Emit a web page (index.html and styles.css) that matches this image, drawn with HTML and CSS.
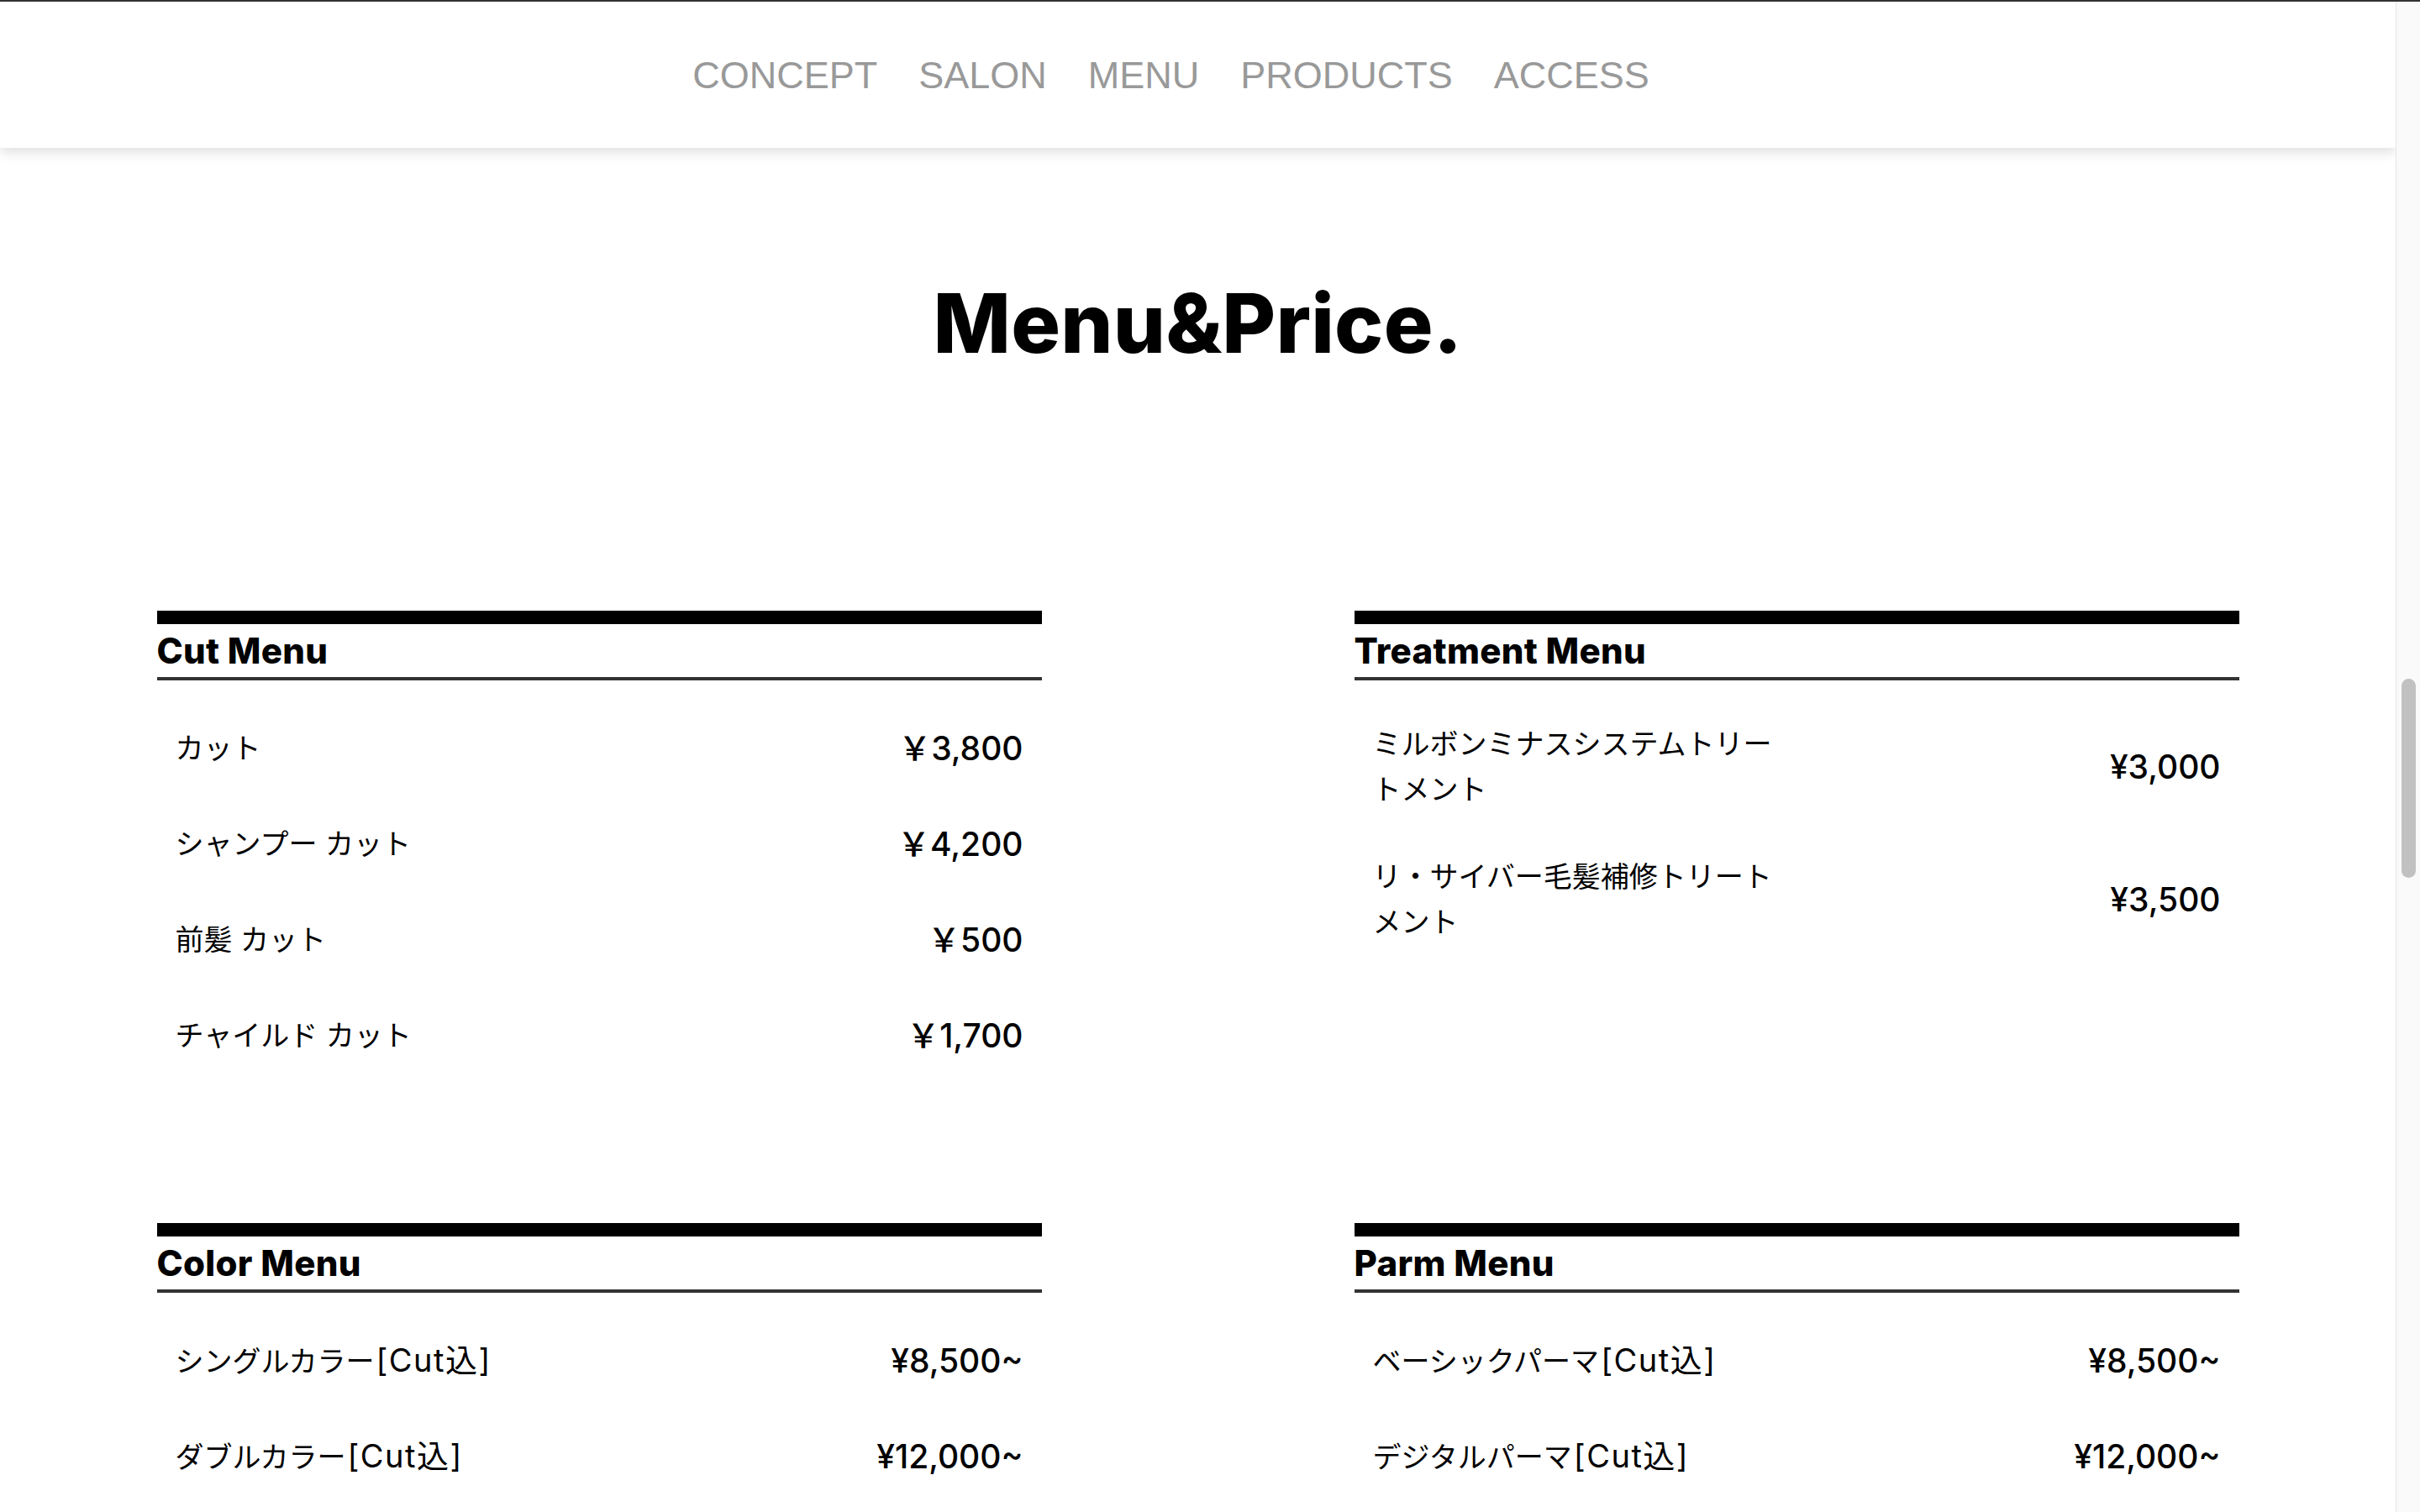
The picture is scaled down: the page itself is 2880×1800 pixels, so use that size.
FILE: index.html
```html
<!DOCTYPE html>
<html lang="ja">
<head>
<meta charset="utf-8">
<title>Menu&amp;Price.</title>
<link rel="stylesheet" href="styles.css">
</head>
<body>
<div class="page">
  <header class="site-header">
    <nav>
      <ul class="nav-list">
        <li>CONCEPT</li>
        <li>SALON</li>
        <li>MENU</li>
        <li>PRODUCTS</li>
        <li>ACCESS</li>
      </ul>
    </nav>
  </header>
  <main class="main">
    <h1 class="title">Menu&amp;Price.</h1>
    <div class="menu-grid">
      <section class="menu-block">
        <h2 class="menu-head">Cut Menu</h2>
        <ul class="menu-list">
          <li class="menu-row"><span class="name">カット</span><span class="price">￥3,800</span></li>
          <li class="menu-row"><span class="name">シャンプー カット</span><span class="price">￥4,200</span></li>
          <li class="menu-row"><span class="name">前髪 カット</span><span class="price">￥500</span></li>
          <li class="menu-row"><span class="name">チャイルド カット</span><span class="price">￥1,700</span></li>
        </ul>
      </section>
      <section class="menu-block">
        <h2 class="menu-head">Treatment Menu</h2>
        <ul class="menu-list">
          <li class="menu-row"><span class="name">ミルボンミナスシステムトリートメント</span><span class="price">¥3,000</span></li>
          <li class="menu-row"><span class="name">リ・サイバー毛髪補修トリートメント</span><span class="price">¥3,500</span></li>
        </ul>
      </section>
      <section class="menu-block">
        <h2 class="menu-head">Color Menu</h2>
        <ul class="menu-list">
          <li class="menu-row"><span class="name">シングルカラー<span class="incl">[Cut込]</span></span><span class="price">¥8,500~</span></li>
          <li class="menu-row"><span class="name">ダブルカラー<span class="incl">[Cut込]</span></span><span class="price">¥12,000~</span></li>
        </ul>
      </section>
      <section class="menu-block">
        <h2 class="menu-head">Parm Menu</h2>
        <ul class="menu-list">
          <li class="menu-row"><span class="name">ベーシックパーマ<span class="incl">[Cut込]</span></span><span class="price">¥8,500~</span></li>
          <li class="menu-row"><span class="name">デジタルパーマ<span class="incl">[Cut込]</span></span><span class="price">¥12,000~</span></li>
        </ul>
      </section>
    </div>
  </main>
</div>
<div class="scrollbar"><div class="thumb"></div></div>
</body>
</html>
```

FILE: styles.css
```css
html, body {
  margin: 0;
  padding: 0;
}
body {
  display: flex;
  height: 1800px;
  overflow: hidden;
  background: #fff;
  border-top: 2px solid #333;
  box-sizing: border-box;
  font-family: Inter, "Noto Sans CJK JP", sans-serif;
  color: #000;
}
.page {
  flex: 1;
  overflow: hidden;
}
.site-header {
  height: 174px;
  display: flex;
  align-items: center;
  justify-content: center;
  background: #fff;
  box-shadow: 0 5px 14px rgba(0, 0, 0, 0.13);
  position: relative;
  z-index: 2;
}
.nav-list {
  list-style: none;
  margin: 0;
  padding: 0 64px 0 0;
  display: flex;
  gap: 49px;
  font-family: "Liberation Sans", Arial, sans-serif;
  font-size: 45px;
  color: #999;
  line-height: 1;
}
.main {
  padding-top: 151px;
}
.title {
  margin: 0;
  text-align: center;
  font-family: Inter, sans-serif;
  font-weight: 800;
  font-size: 98px;
  line-height: 115px;
  letter-spacing: 0.2px;
}
.menu-grid {
  width: 2478px;
  margin: 285px auto 0;
  display: grid;
  grid-template-columns: 1053px 1053px;
  justify-content: space-between;
  row-gap: 166px;
  align-items: start;
}
.menu-head {
  margin: 0;
  border-top: 16px solid #000;
  border-bottom: 4px solid #333;
  font-family: Inter, sans-serif;
  font-weight: 800;
  font-size: 42px;
  line-height: 63px;
  letter-spacing: 0.3px;
}
.menu-list {
  list-style: none;
  margin: 24px 0 0;
  padding: 0;
}
.menu-row {
  display: flex;
  justify-content: space-between;
  align-items: center;
  padding: 25px 22px;
}
.name {
  flex: 0 0 50%;
  font-size: 34px;
  line-height: 54px;
}
.incl {
  font-size: 38px;
  letter-spacing: 1.5px;
  padding-left: 2px;
}
.price {
  font-size: 39px;
  font-weight: 500;
  line-height: 64px;
  text-align: right;
}
.scrollbar {
  width: 29px;
  flex: 0 0 29px;
  background: #fafafa;
  border-left: 1px solid #e6e6e6;
  padding: 806px 5px 0 6px;
  box-sizing: border-box;
}
.thumb {
  height: 237px;
  border-radius: 9px;
  background: #c1c1c1;
}
```
